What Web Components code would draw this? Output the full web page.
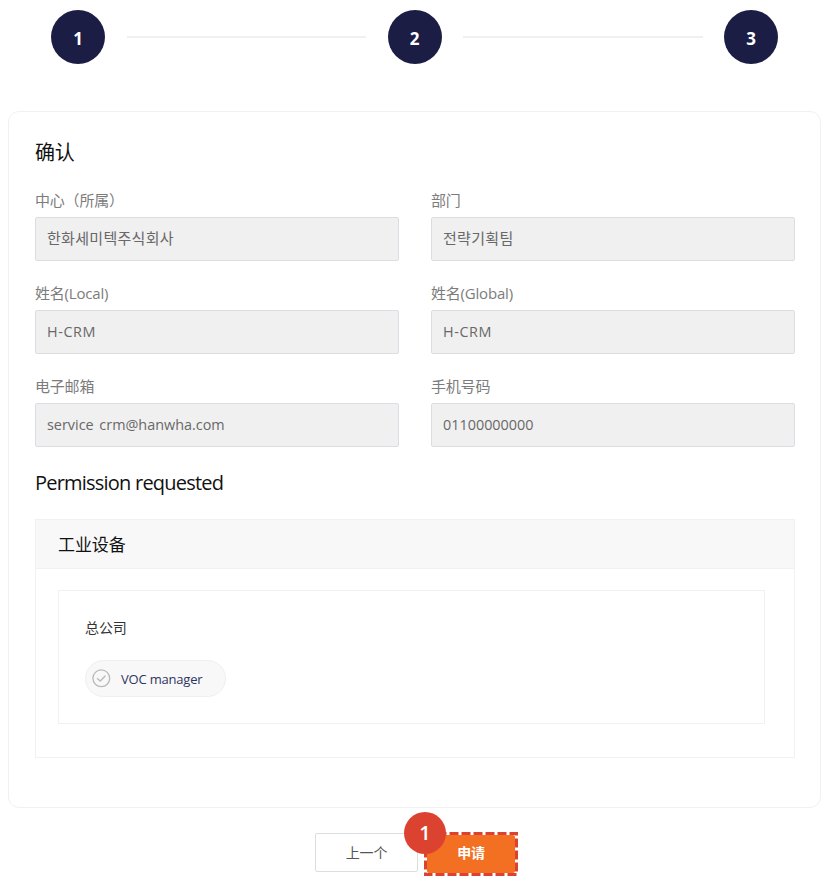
<!DOCTYPE html>
<html lang="zh">
<head>
<meta charset="utf-8">
<title>确认</title>
<style>
html,body{margin:0;background:#fff}
body{font-family:"Open Sans","Noto Sans CJK SC",sans-serif;color:#111}
</style>
</head>
<body>
<request-page></request-page>
<script>
const define = (name, html) => {
  const t = document.createElement('template');
  t.innerHTML = html;
  customElements.define(name, class extends HTMLElement {
    constructor() {
      super();
      this.attachShadow({mode: 'open'}).append(t.content.cloneNode(true));
    }
  });
};

define('step-dot', `<style>
:host{display:flex;flex:none;width:54px;height:54px;border-radius:50%;background:#1b1d45;color:#fff;align-items:center;justify-content:center;font:700 17px/22px "Open Sans",sans-serif;box-sizing:border-box;padding-top:4px}
</style><slot></slot>`);

define('step-bar', `<style>
:host{display:flex;align-items:center;padding:9.5px 51px 0 51px;height:54px}
i{flex:1;height:2px;background:#f0f0f1;margin:0 21.5px}
</style><step-dot>1</step-dot><i></i><step-dot>2</step-dot><i></i><step-dot>3</step-dot>`);

define('form-field', `<style>
:host{display:block}
.label{height:23px;line-height:23px;font-size:15px;color:#7c7c7c;letter-spacing:-.2px;white-space:nowrap}
.box{box-sizing:border-box;height:44px;margin-top:5px;border:1px solid #dadee3;border-radius:2px;background:#f0f0f0;padding:0 11px;line-height:42px;font-size:14.4px;color:#686868;white-space:pre}
</style><div class="label"><slot name="label"></slot></div><div class="box"><slot></slot></div>`);

define('role-chip', `<style>
:host{display:inline-flex;align-items:center;box-sizing:border-box;width:141px;height:37px;border:1px solid #efefef;border-radius:19px;background:#f8f8f8;padding-left:6px;gap:10px;font-size:13px;color:#2e3560;letter-spacing:-.2px;white-space:nowrap}
svg{flex:none}
span{padding-top:1px}
</style><svg width="19" height="19" viewBox="0 0 19 19" fill="none" stroke="#b9b9b9"><circle cx="9.3" cy="9.3" r="8.4" stroke-width="1.3"/><path d="M5 9.3 8.2 12 13.4 6.8" stroke-width="1.3"/></svg><span><slot></slot></span>`);

define('permission-card', `<style>
:host{display:block;box-sizing:border-box;height:239px;border:1px solid #f1f1f1}
header{box-sizing:border-box;height:49px;background:#f8f8f8;border-bottom:1px solid #f1f1f1;padding-left:22px;line-height:49px;font-size:17px;letter-spacing:-.1px;color:#111}
section{box-sizing:border-box;height:134px;margin:21px 29px 0 22px;border:1px solid #f1f1f1;padding:25px 26px}
.office{height:24px;line-height:24px;font-size:14px;letter-spacing:-.1px;color:#333;margin-bottom:20px}
</style><header><slot name="title"></slot></header><section><div class="office"><slot name="office"></slot></div><slot></slot></section>`);

define('action-button', `<style>
:host{display:block;box-sizing:border-box;width:103px;height:39px;border:1px solid #dadee3;border-radius:2px;background:#fff;color:#555;text-align:center;font-size:14px;line-height:37px;letter-spacing:-.2px}
:host([primary]){width:88px;height:38px;border:0;background:#f36f21;color:#fff;font-weight:700;line-height:36px}
</style><slot></slot>`);

define('callout-frame', `<style>
:host{display:block;position:relative;width:94px;height:44px;box-sizing:border-box;padding:3px}
svg{position:absolute;left:0;top:0}
b{position:absolute;left:-20px;top:-20px;width:42px;height:42px;border-radius:50%;background:#db4230;color:#fff;text-align:center;font:600 20px/42px "Open Sans",sans-serif}
</style><slot></slot><svg width="94" height="44" fill="none" stroke="#db4230" stroke-width="3"><path d="M1.5 1.5H92.5V42.5H1.5Z" stroke-dasharray="9 3"/></svg><b>1</b>`);

define('request-page', `<style>
:host{display:flex;flex-direction:column;width:829px;height:883px;overflow:hidden}
main{box-sizing:border-box;margin:47px 8px 0;height:697px;border:1px solid #f1f1f1;border-radius:11px;padding:25px 25px 0 26px}
h2{margin:0;font-weight:400;font-size:20px;line-height:32px;height:32px;color:#111;letter-spacing:-.3px}
.en{letter-spacing:-.78px;margin:20px 0 20px}
.grid{display:grid;grid-template-columns:1fr 1fr;column-gap:32px;row-gap:21px;margin-top:20px}
.ko{font-family:"Noto Sans CJK KR",sans-serif;font-size:15px;letter-spacing:.3px;line-height:1}
.mail{word-spacing:2px}
.crm{letter-spacing:.6px}
footer{display:flex;align-items:flex-start;padding:25px 0 0 315px;gap:6px}
action-button{flex:none}
.apply{margin-top:-1px}
</style>
<step-bar></step-bar>
<main>
<h2>确认</h2>
<div class="grid">
<form-field><span slot="label">中心（所属）</span><span class="ko">한화세미텍주식회사</span></form-field>
<form-field><span slot="label">部门</span><span class="ko">전략기획팀</span></form-field>
<form-field><span slot="label">姓名(Local)</span><span class="crm">H-CRM</span></form-field>
<form-field><span slot="label">姓名(Global)</span><span class="crm">H-CRM</span></form-field>
<form-field><span slot="label">电子邮箱</span><span class="mail">service crm@hanwha.com</span></form-field>
<form-field><span slot="label">手机号码</span>01100000000</form-field>
</div>
<h2 class="en">Permission requested</h2>
<permission-card><span slot="title">工业设备</span><span slot="office">总公司</span><role-chip>VOC manager</role-chip></permission-card>
</main>
<footer><action-button>上一个</action-button><callout-frame class="apply"><action-button primary>申请</action-button></callout-frame></footer>`);
</script>
</body>
</html>
